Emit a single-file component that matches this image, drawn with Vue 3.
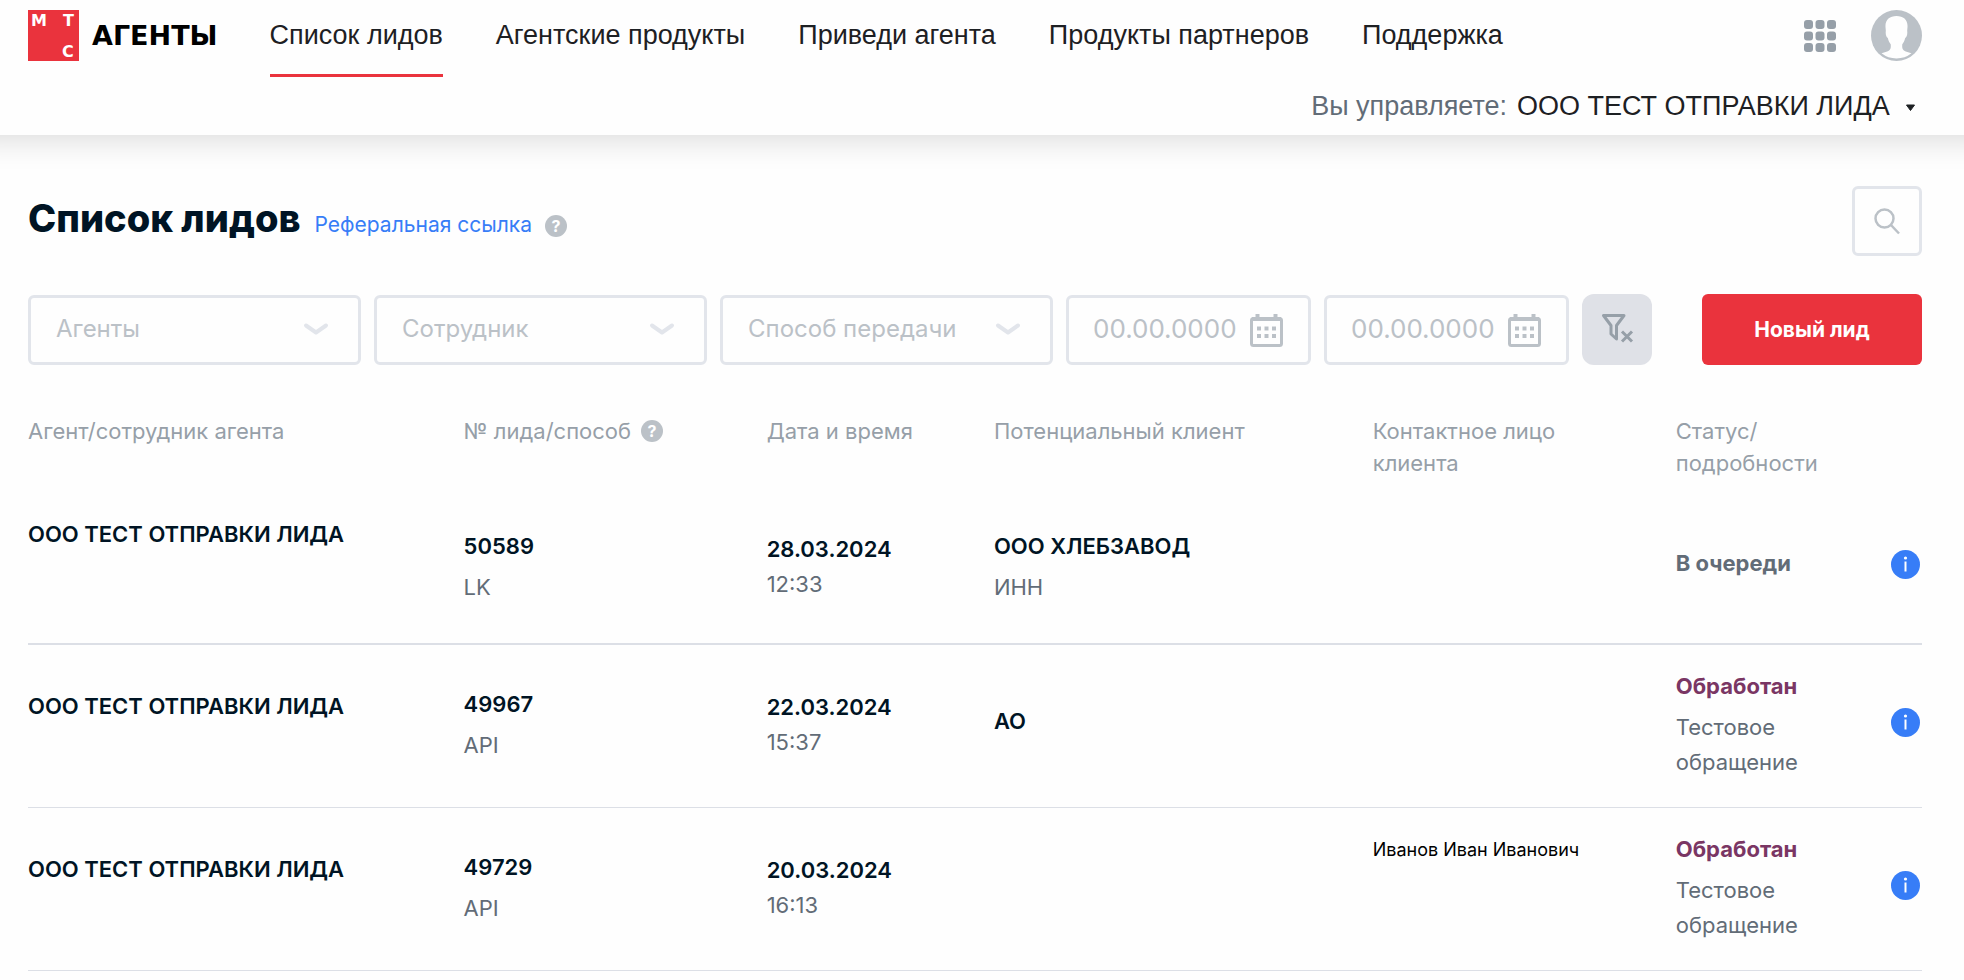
<script setup>
import { ref } from 'vue'

const navItems = ['Список лидов', 'Агентские продукты', 'Приведи агента', 'Продукты партнеров', 'Поддержка']
const selects = ['Агенты', 'Сотрудник', 'Способ передачи']
const dates = [
  { id: 'date-from', label: 'Дата с' },
  { id: 'date-to', label: 'Дата по' },
]
const dateValues = ref(['', ''])

const leads = [
  {
    agent: 'ООО ТЕСТ ОТПРАВКИ ЛИДА', id: '50589', method: 'LK', date: '28.03.2024', time: '12:33',
    client: 'ООО ХЛЕБЗАВОД', clientInfo: 'ИНН', contact: '', status: 'В очереди', details: '', kind: 'queued',
  },
  {
    agent: 'ООО ТЕСТ ОТПРАВКИ ЛИДА', id: '49967', method: 'API', date: '22.03.2024', time: '15:37',
    client: 'АО', clientInfo: '', contact: '', status: 'Обработан', details: 'Тестовое обращение', kind: 'done',
  },
  {
    agent: 'ООО ТЕСТ ОТПРАВКИ ЛИДА', id: '49729', method: 'API', date: '20.03.2024', time: '16:13',
    client: '', clientInfo: '', contact: 'Иванов Иван Иванович', status: 'Обработан', details: 'Тестовое обращение', kind: 'done',
  },
]
</script>

<template>
  <div class="page">
    <header class="header">
      <div class="bar">
        <a class="brand" href="#">
          <svg class="logo" viewBox="0 0 51 51" aria-hidden="true">
            <rect width="51" height="51" fill="#ea333d" />
            <g fill="#fff" font-family="DejaVu Sans, sans-serif" font-weight="700" font-size="16">
              <text x="3" y="16">М</text>
              <text x="35" y="16">Т</text>
              <text x="34" y="47">С</text>
            </g>
          </svg>
          <span>АГЕНТЫ</span>
        </a>
        <nav class="nav">
          <a v-for="(item, i) in navItems" :key="item" href="#" :class="{ active: i === 0 }">{{ item }}</a>
        </nav>
        <div class="tools">
          <button type="button" class="plain" aria-label="Приложения">
            <svg width="32" height="32" viewBox="0 0 32 32" fill="#969fa8">
              <template v-for="r in 3" :key="r">
                <rect v-for="c in 3" :key="c" :x="(c - 1) * 11.5" :y="(r - 1) * 11.5" width="9" height="9" rx="3" />
              </template>
            </svg>
          </button>
          <button type="button" class="plain" aria-label="Профиль">
            <svg width="51" height="51" viewBox="0 0 51 51">
              <circle cx="25.5" cy="25.5" r="25.5" fill="#bbc1c7" />
              <path
                fill="#fefefe"
                d="M25.500 6C18.500 6 14 10 14.500 17C14.600 19 15 20.500 14.700 22C14.600 25 15.500 27 16.800 28C17.500 31 18.500 32.500 19.800 34.500V37C19.800 41 15 42 10.500 43.300A24.300 24.300 0 0 0 40.500 43.300C36 42 31.200 41 31.200 37V34.500C32.500 32.500 33.500 31 34.200 28C35.500 27 36.400 25 36.300 22C36 20.500 36.400 19 36.500 17C37 10 32.500 6 25.500 6Z"
              />
            </svg>
          </button>
        </div>
      </div>
      <div class="company">
        <label for="company">Вы управляете:</label>
        <div class="company-select">
          <select id="company">
            <option>ООО ТЕСТ ОТПРАВКИ ЛИДА</option>
          </select>
          <svg width="11" height="8" viewBox="0 0 11 8" aria-hidden="true">
            <path d="M1.500 1H9.500L5.500 6.500Z" fill="#1d2023" stroke="#1d2023" stroke-linejoin="round" />
          </svg>
        </div>
      </div>
    </header>

    <main class="main">
      <div class="heading">
        <div class="titles">
          <h1>Список лидов</h1>
          <a href="#">Реферальная ссылка</a>
          <button type="button" class="help" aria-label="Справка о ссылке">?</button>
        </div>
        <button type="button" class="search" aria-label="Поиск">
          <svg width="26" height="27" viewBox="0 0 26 27" fill="none" stroke="#bbc1c7" stroke-width="2.5">
            <circle cx="10.500" cy="10.500" r="9" />
            <path d="M17 17L25 25.500" />
          </svg>
        </button>
      </div>

      <form class="filters" @submit.prevent>
        <div v-for="name in selects" :key="name" class="select">
          <select :aria-label="name">
            <option>{{ name }}</option>
          </select>
          <svg width="26" height="14" viewBox="0 0 26 14" aria-hidden="true">
            <path d="M3 3.500L13 10.500L23 3.500" fill="none" stroke="#e2e5eb" stroke-width="4" stroke-linecap="round" stroke-linejoin="round" />
          </svg>
        </div>
        <div v-for="(d, i) in dates" :key="d.id" class="date">
          <input :id="d.id" v-model="dateValues[i]" type="text" placeholder="00.00.0000" :aria-label="d.label" />
          <button type="button" class="plain" :aria-label="d.label + ': календарь'">
            <svg width="33" height="33" viewBox="0 0 33 33" fill="none" stroke="#bbc1c7" stroke-width="3">
              <rect x="1.500" y="4.500" width="30" height="27" rx="2" />
              <path d="M2 5H31M7.500 0V4M25.500 0V4" stroke-width="4" />
              <path d="M7 14.500H11M14.500 14.500H18.500M22 14.500H26M7 22H11M14.500 22H18.500M22 22H26" stroke-width="4" />
            </svg>
          </button>
        </div>
        <button type="button" class="reset" aria-label="Сбросить фильтры">
          <svg width="33" height="30" viewBox="0 0 33 30" fill="none" stroke="#969fa8" stroke-width="3">
            <path d="M2.500 2.500H23L15.500 12.500V26L10 21V12.500Z" stroke-linejoin="round" />
            <path d="M21 18.500L31 28.500M31 18.500L21 28.500" />
          </svg>
        </button>
        <button type="button" class="create">Новый лид</button>
      </form>

      <table class="leads">
        <thead>
          <tr>
            <th scope="col" class="c-agent">Агент/сотрудник агента</th>
            <th scope="col" class="c-id">
              <span class="with-help">№ лида/способ <button type="button" class="help" aria-label="Справка о способе">?</button></span>
            </th>
            <th scope="col" class="c-date">Дата и время</th>
            <th scope="col" class="c-client">Потенциальный клиент</th>
            <th scope="col" class="c-contact">Контактное лицо клиента</th>
            <th scope="col" class="c-status">Статус/<br />подробности</th>
          </tr>
        </thead>
        <tbody>
          <tr v-for="lead in leads" :key="lead.id" :class="lead.kind">
            <td><div class="agent strong">{{ lead.agent }}</div></td>
            <td>
              <p class="strong spaced">{{ lead.id }}</p>
              <p>{{ lead.method }}</p>
            </td>
            <td>
              <p class="strong">{{ lead.date }}</p>
              <p>{{ lead.time }}</p>
            </td>
            <td>
              <p v-if="lead.client" class="strong spaced">{{ lead.client }}</p>
              <p v-if="lead.clientInfo">{{ lead.clientInfo }}</p>
            </td>
            <td class="contact">{{ lead.contact }}</td>
            <td>
              <div class="status">
                <div class="status-text">
                  <p class="state spaced">{{ lead.status }}</p>
                  <p v-if="lead.details">{{ lead.details }}</p>
                </div>
                <button type="button" class="plain info" :aria-label="'Подробнее о лиде ' + lead.id">
                  <svg width="29" height="29" viewBox="0 0 29 29">
                    <circle cx="14.500" cy="14.500" r="14.500" fill="#377df7" />
                    <circle cx="14.500" cy="8" r="1.600" fill="#fff" />
                    <path d="M14.500 11.500V21.500" stroke="#fff" stroke-width="2" />
                  </svg>
                </button>
              </div>
            </td>
          </tr>
        </tbody>
      </table>
    </main>
  </div>
</template>

<style>
body {
  background: #fefefe;
}
</style>

<style scoped>
.page {
  font-family: 'Inter', 'Liberation Sans', sans-serif;
  font-size: 22px;
  color: #626c77;
}
button,
select,
input {
  font: inherit;
  color: inherit;
  margin: 0;
  padding: 0;
  border: 0;
  background: none;
}
select {
  appearance: none;
  cursor: pointer;
}
button {
  cursor: pointer;
}
a {
  text-decoration: none;
}
svg {
  display: block;
  flex: none;
}
p,
h1 {
  margin: 0;
}
.plain {
  display: block;
}

.header {
  padding: 0 42px 0 28px;
  background: #fefefe;
  box-shadow: 0 -26px 30px 30px rgba(0, 0, 0, 0.15);
  font-family: 'Liberation Sans', Arial, sans-serif;
  font-size: 27px;
  line-height: 32px;
}
.bar {
  display: flex;
  align-items: flex-start;
}
.brand {
  display: flex;
  align-items: center;
  gap: 13px;
  margin: 10px 52px 0 0;
  color: #000;
  font: 700 27px/32px 'DejaVu Sans', sans-serif;
}
.logo {
  width: 51px;
  height: 51px;
}
.nav {
  display: flex;
  gap: 53px;
}
.nav a {
  padding: 19px 0 23px;
  border-bottom: 3px solid transparent;
  color: #1d2023;
  white-space: nowrap;
}
.nav a.active {
  border-color: #ea333d;
}
.tools {
  display: flex;
  align-items: center;
  gap: 35px;
  margin: 10px 0 0 auto;
}
.company {
  display: flex;
  justify-content: flex-end;
  align-items: center;
  gap: 10px;
  height: 58px;
  padding-right: 6px;
}
.company-select {
  position: relative;
  color: #1d2023;
}
.company-select select {
  display: block;
  padding-right: 26px;
}
.company-select svg {
  position: absolute;
  right: 0;
  top: 50%;
  margin-top: -2px;
  pointer-events: none;
}

.main {
  padding: 51px 42px 0 28px;
}
.heading {
  display: flex;
  justify-content: space-between;
  align-items: center;
}
.titles {
  display: flex;
  align-items: baseline;
  padding-bottom: 6px;
}
.titles h1 {
  margin-right: 14px;
  color: #001424;
  font-size: 38px;
  line-height: 48px;
  font-weight: 800;
}
.titles a {
  margin-right: 13px;
  color: #377df7;
  font-size: 21px;
}
.help {
  width: 22px;
  height: 22px;
  border-radius: 50%;
  background: #bbc1c7;
  color: #fff;
  font-size: 16px;
  line-height: 22px;
  font-weight: 700;
  text-align: center;
}
.search {
  display: flex;
  align-items: center;
  justify-content: center;
  width: 70px;
  height: 70px;
  border: 3px solid #e2e5eb;
  border-radius: 6px;
}

.filters {
  display: flex;
  align-items: flex-end;
  gap: 13px;
  margin-top: 38px;
  color: #bbc1c7;
}
.select,
.date {
  box-sizing: border-box;
  height: 70px;
  border: 3px solid #e2e5eb;
  border-radius: 6px;
}
.select {
  position: relative;
  flex: 0 1 333px;
}
.select select {
  width: 100%;
  height: 100%;
  padding: 0 60px 4px 25px;
  font-size: 24px;
}
.select svg {
  position: absolute;
  right: 29px;
  top: 50%;
  margin-top: -8px;
  pointer-events: none;
}
.date {
  display: flex;
  align-items: center;
  justify-content: space-between;
  flex: 0 1 245px;
  padding: 0 25px 0 24px;
}
.date input {
  width: 148px;
  min-width: 0;
  height: 100%;
  padding-bottom: 4px;
  box-sizing: border-box;
  font-size: 26px;
}
.date input::placeholder {
  color: #bbc1c7;
  opacity: 1;
}
.reset {
  display: flex;
  align-items: center;
  justify-content: center;
  width: 70px;
  height: 71px;
  padding-bottom: 4px;
  border-radius: 12px;
  background: #dfe1e7;
}
.create {
  flex: 0 0 220px;
  height: 71px;
  margin-left: auto;
  border-radius: 6px;
  background: #ea333d;
  color: #fff;
  font-size: 21px;
  font-weight: 700;
}

.leads {
  width: 100%;
  margin-top: 50px;
  border-collapse: separate;
  border-spacing: 0;
  table-layout: fixed;
  line-height: 35px;
}
.c-agent { width: 23%; }
.c-id { width: 16%; }
.c-date { width: 12%; }
.c-client { width: 20%; }
.c-contact { width: 16%; }
.c-status { width: 13%; }
.leads th {
  box-sizing: border-box;
  padding: 0 36px 14px 0;
  color: #969fa8;
  font-weight: 400;
  line-height: 32px;
  text-align: left;
  vertical-align: top;
}
.with-help {
  display: flex;
  align-items: center;
  gap: 10px;
}
.leads td {
  padding: 24px 0 27px;
  border-bottom: 1px solid #dcdfe6;
  vertical-align: middle;
}
.leads .queued td {
  border-bottom-width: 2px;
}
.strong {
  color: #001424;
  font-weight: 600;
}
.spaced {
  margin-bottom: 6px;
}
.agent {
  min-height: 71px;
}
.queued .agent {
  min-height: 99px;
}
.leads .contact {
  color: #000;
  font-size: 18px;
  vertical-align: top;
}
.status {
  display: flex;
  align-items: center;
  justify-content: space-between;
  padding-right: 2px;
}
.status-text {
  max-width: 160px;
}
.state {
  font-weight: 700;
}
.done .state {
  color: #7a3664;
}
.info {
  margin-bottom: 4px;
}
</style>
